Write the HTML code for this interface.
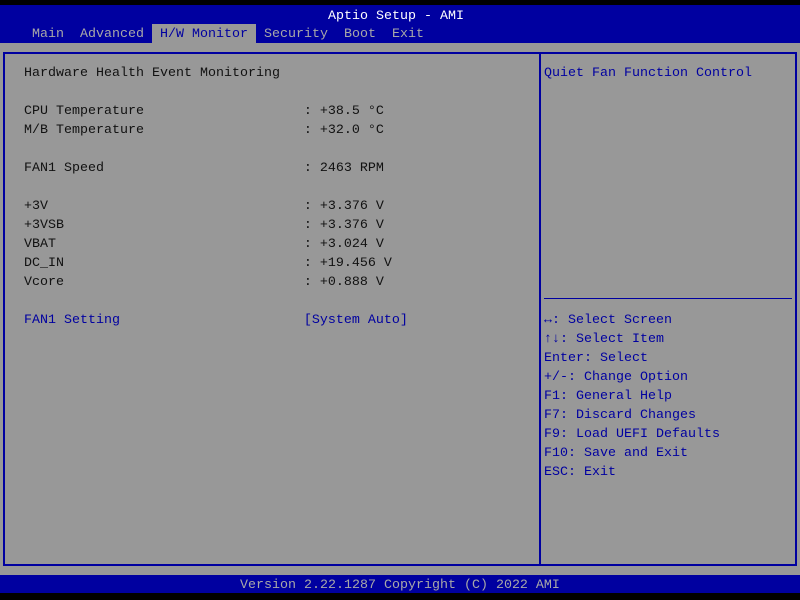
<!DOCTYPE html>
<html><head><style>
*{margin:0;padding:0}
body{width:800px;height:600px;background:#000;position:relative;overflow:hidden;font-family:"Liberation Mono","DejaVu Sans Mono",monospace;font-size:13.33px;line-height:19px}
.a{position:absolute;white-space:pre}
#top{position:absolute;left:0;top:5px;width:800px;height:38px;background:#0000a0}
#gray{position:absolute;left:0;top:43px;width:800px;height:532px;background:#989898}
#box{position:absolute;left:3px;top:52px;width:790px;height:510px;border:2px solid #0000a0}
#vl{position:absolute;left:539px;top:52px;width:2px;height:514px;background:#0000a0}
#hl{position:absolute;left:544px;top:298px;width:248px;height:1px;background:#0000a0}
#foot{position:absolute;left:0;top:575px;width:800px;height:18px;background:#0000a0}
.k{color:#111}
.b{color:#0000a0}
</style></head><body>
<div id="top"></div>
<div class="a" style="left:328px;top:7px;color:#fff">Aptio Setup - AMI</div>
<div class="a" style="left:152px;top:24px;width:104px;height:19px;background:#989898"></div>
<div class="a" style="left:32px;top:25px;color:#a8a8a8">Main  Advanced </div>
<div class="a" style="left:160px;top:25px;color:#0000a0">H/W Monitor</div>
<div class="a" style="left:264px;top:25px;color:#a8a8a8">Security  Boot  Exit</div>
<div id="gray"></div>
<div id="box"></div>
<div id="vl"></div>
<div id="hl"></div>
<div class="a k" style="left:24px;top:64px">Hardware Health Event Monitoring

CPU Temperature                    : +38.5 °C
M/B Temperature                    : +32.0 °C

FAN1 Speed                         : 2463 RPM

+3V                                : +3.376 V
+3VSB                              : +3.376 V
VBAT                               : +3.024 V
DC_IN                              : +19.456 V
Vcore                              : +0.888 V
</div>
<div class="a b" style="left:24px;top:311px">FAN1 Setting                       [System Auto]</div>
<div class="a b" style="left:544px;top:64px">Quiet Fan Function Control</div>
<div class="a b" style="left:544px;top:311px"><b>↔</b>: Select Screen
<b>↑↓</b>: Select Item
Enter: Select
+/-: Change Option
F1: General Help
F7: Discard Changes
F9: Load UEFI Defaults
F10: Save and Exit
ESC: Exit</div>
<div id="foot"></div>
<div class="a" style="left:240px;top:576px;color:#a8a8a8;line-height:19px">Version 2.22.1287 Copyright (C) 2022 AMI</div>
</body></html>
